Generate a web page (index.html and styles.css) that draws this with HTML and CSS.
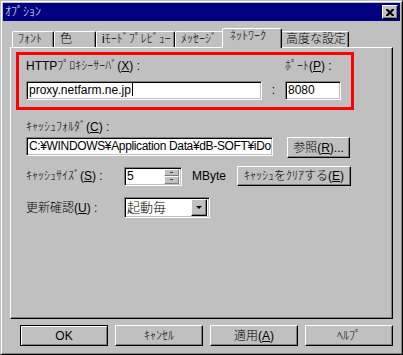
FILE: index.html
```
<!DOCTYPE html>
<html lang="ja">
<head>
    <meta charset="UTF-8">
    <title>ｵﾌﾟｼｮﾝ</title>
    <link rel="stylesheet" href="styles.css">
</head>
<body>
    <div class="window">
        <div class="titlebar">
            <span class="title">ｵﾌﾟｼｮﾝ</span>
            <span class="close">
                <svg width="8" height="7" viewBox="0 0 8 7">
                    <path d="M0 0h2l2 2l2 -2h2v1l-2.5 2.5l2.5 2.5v1h-2l-2 -2l-2 2h-2v-1l2.5 -2.5l-2.5 -2.5z" fill="#000"/>
                </svg>
            </span>
        </div>

        <div class="tabs">
            <div class="tab tab-font">ﾌｫﾝﾄ</div>
            <div class="tab tab-color">色</div>
            <div class="tab tab-preview">iﾓｰﾄﾞﾌﾟﾚﾋﾞｭｰ</div>
            <div class="tab tab-message">ﾒｯｾｰｼﾞ</div>
            <div class="tab tab-network active">ﾈｯﾄﾜｰｸ</div>
            <div class="tab tab-advanced">高度な設定</div>
        </div>

        <div class="panel">
            <div class="proxy-box">
                <label class="proxy-label">HTTPﾌﾟﾛｷｼｰｻｰﾊﾞ(<u>X</u>) :</label>
                <span></span>
                <label class="proxy-label">ﾎﾟｰﾄ(<u>P</u>) :</label>
                <div class="field">proxy.netfarm.ne.jp<span class="caret"></span></div>
                <span class="colon">:</span>
                <div class="field">8080</div>
            </div>

            <div class="settings">
                <label class="top-label">ｷｬｯｼｭﾌｫﾙﾀﾞ(<u>C</u>) :</label>
                <div class="row row-folder">
                    <div class="field field-path">C:¥WINDOWS¥Application Data¥dB-SOFT¥iDo</div>
                    <div class="btn btn-browse">参照(<u>R</u>)...</div>
                </div>
                <div class="row row-size">
                    <label class="side-label">ｷｬｯｼｭｻｲｽﾞ(<u>S</u>) :</label>
                    <div class="field spin">
                        <span class="spin-value">5</span>
                        <span class="spin-btns"><i class="up"></i><i class="down"></i></span>
                    </div>
                    <span class="unit">MByte</span>
                    <div class="btn btn-clear">ｷｬｯｼｭをｸﾘｱする(<u>E</u>)</div>
                </div>
                <div class="row row-check">
                    <label class="side-label">更新確認(<u>U</u>) :</label>
                    <div class="field select">
                        <span class="select-value">起動毎</span>
                        <span class="drop"><i></i></span>
                    </div>
                </div>
            </div>
        </div>

        <div class="buttons">
            <div class="btn btn-default">OK</div>
            <div class="btn">ｷｬﾝｾﾙ</div>
            <div class="btn">適用(<u>A</u>)</div>
            <div class="btn">ﾍﾙﾌﾟ</div>
        </div>
    </div>
</body>
</html>
```

FILE: styles.css
```
*,
*::after,
*::before{
    padding: 0;
    margin: 0;
    box-sizing: border-box;
}
html{
    font: 300 12px/14px "Liberation Sans", "Noto Sans CJK JP", sans-serif;
    color: #000;
}
body{
    background-color: #c0c0c0;
}
u{
    text-decoration: underline;
    text-underline-offset: 1px;
}

/* window frame */
.window{
    width: 403px;
    height: 355px;
    background-color: #c0c0c0;
    border: 1px solid;
    border-color: #c0c0c0 #000 #000 #c0c0c0;
    box-shadow: inset 1px 1px #fff, inset -1px -1px #808080;
    padding: 2px;
    display: flex;
    flex-direction: column;
}
.titlebar{
    height: 18px;
    background-color: #000080;
    color: #fff;
    display: flex;
    align-items: center;
    justify-content: space-between;
    padding: 0 2px 0 2px;
}
.close{
    width: 16px;
    height: 14px;
    background-color: #c0c0c0;
    border: 1px solid;
    border-color: #fff #000 #000 #fff;
    box-shadow: inset -1px -1px #808080;
    display: flex;
    align-items: center;
    justify-content: center;
    padding-right: 1px;
}
.close svg{
    display: block;
}

/* tabs */
.tabs{
    display: flex;
    align-items: flex-end;
    height: 19px;
    margin: 7px 7px 0 9px;
}
.tab{
    height: 16px;
    line-height: 15px;
    padding-left: 5px;
    border-top: 1px solid #fff;
    border-left: 1px solid #fff;
    border-right: 1px solid #000;
    border-top-left-radius: 2px;
    border-top-right-radius: 2px;
    box-shadow: inset -1px 0 #808080;
    white-space: nowrap;
}
.tab-font{ width: 42px; }
.tab-color{ width: 42px; }
.tab-preview{ width: 79px; }
.tab-message{ width: 49px; }
.tab-network{ width: 56px; }
.tab-advanced{ width: 69px; }
.tab.active{
    width: 60px;
    height: 20px;
    margin: 0 -2px -1px -2px;
    padding-left: 7px;
    background-color: #c0c0c0;
    position: relative;
    z-index: 1;
}

/* page */
.panel{
    margin: 0 7px;
    height: 272px;
    border: 1px solid;
    border-color: #fff #000 #000 #fff;
    box-shadow: inset -1px -1px #808080;
    padding: 4px 5px;
}
.proxy-box{
    width: 338px;
    height: 58px;
    border: 3px solid #ff0000;
    padding: 4px 0 0 7px;
    display: grid;
    grid-template-columns: 236px 23px 56px;
    grid-template-rows: 14px 19px;
    row-gap: 8px;
}
.colon{
    text-align: center;
    line-height: 19px;
}
.field{
    height: 19px;
    background-color: #fff;
    border: 1px solid;
    border-color: #808080 #fff #fff #808080;
    box-shadow: inset 1px 1px #000, inset -1px -1px #c0c0c0;
    padding: 0 2px;
    line-height: 17px;
    white-space: nowrap;
    overflow: hidden;
}
.caret{
    display: inline-block;
    width: 1px;
    height: 13px;
    background-color: #000;
    vertical-align: -2px;
    margin-left: 1px;
}

.settings{
    padding: 10px 0 0 10px;
}
.top-label{
    display: block;
    margin-bottom: 3px;
}
.row{
    display: flex;
    align-items: center;
}
.row-folder{
    align-items: flex-start;
    margin-bottom: 8px;
}
.field-path{
    width: 247px;
    margin-right: 14px;
    letter-spacing: -0.35px;
}
.side-label{
    width: 98px;
}
.spin{
    width: 58px;
    display: flex;
    align-items: center;
    padding-right: 2px;
}
.spin-value{
    flex: 1;
}
.spin-btns{
    display: flex;
    flex-direction: column;
    width: 15px;
    height: 15px;
}
.spin-btns i{
    flex: 1;
    background-color: #c0c0c0;
    border: 1px solid;
    border-color: #fff #808080 #808080 #fff;
    display: flex;
    align-items: center;
    justify-content: center;
}
.spin-btns i::after{
    content: "";
    width: 3px;
    height: 1px;
    background-color: #404040;
}
.unit{
    margin-left: 10px;
    width: 45px;
}
.row-size{
    margin-bottom: 11px;
}
.select{
    width: 86px;
    height: 21px;
    line-height: 19px;
    display: flex;
    align-items: center;
    padding-right: 2px;
}
.select-value{
    flex: 1;
    font-size: 13px;
}
.drop{
    width: 16px;
    height: 17px;
    background-color: #c0c0c0;
    border: 1px solid;
    border-color: #fff #000 #000 #fff;
    box-shadow: inset -1px -1px #808080;
    display: flex;
    align-items: center;
    justify-content: center;
}
.drop i{
    width: 0;
    height: 0;
    border-left: 3px solid transparent;
    border-right: 3px solid transparent;
    border-top: 3px solid #000;
}

/* buttons */
.btn{
    height: 21px;
    background-color: #c0c0c0;
    border: 1px solid;
    border-color: #fff #000 #000 #fff;
    box-shadow: inset -1px -1px #808080;
    display: flex;
    align-items: center;
    justify-content: center;
    white-space: nowrap;
}
.btn-browse{
    width: 63px;
}
.btn-clear{
    width: 114px;
    height: 20px;
}
.buttons{
    display: flex;
    justify-content: flex-end;
    gap: 7px;
    margin-top: 6px;
    padding-right: 7px;
}
.buttons .btn{
    width: 88px;
}
.buttons .btn-default{
    border-color: #000;
    box-shadow: inset 1px 1px #fff, inset -1px -1px #808080;
}
```
